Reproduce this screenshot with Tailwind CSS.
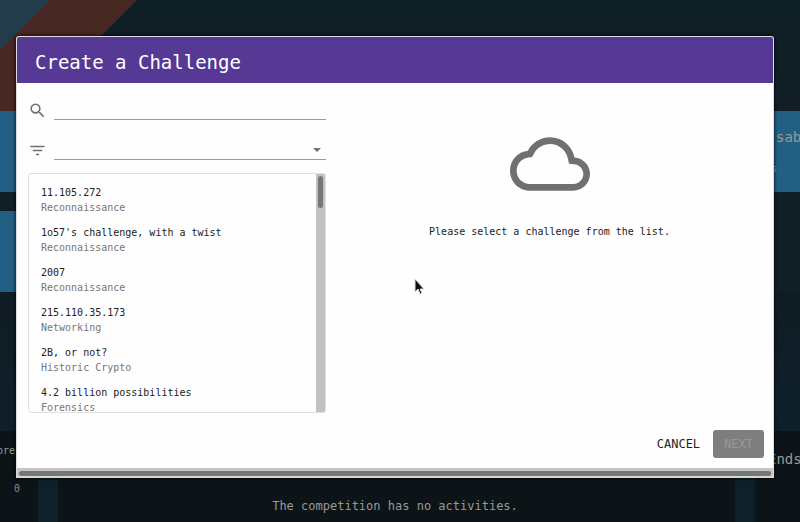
<!DOCTYPE html>
<html lang="en">
<head>
  <meta charset="UTF-8" />
  <meta name="viewport" content="width=device-width, initial-scale=1.0" />
  <title>Create a Challenge</title>
  <script src="https://cdn.jsdelivr.net/npm/@tailwindcss/browser@4"></script>
</head>
<body class="relative min-h-screen overflow-hidden bg-[#101e25] font-['DejaVu_Sans_Mono','Liberation_Mono',monospace]">

  <!-- Dimmed competition page -->
  <div class="min-h-screen flex flex-col text-[#999]">
    <div class="h-[111px] bg-linear-to-b from-[#0e1f26] to-[#121d24]">
      <svg class="w-[140px] h-[111px]" viewBox="0 0 140 111" aria-hidden="true">
        <path d="M0 0H137L26 111H0Z" fill="#472823" />
        <path d="M0 0H50L0 50Z" fill="#233b4a" />
      </svg>
    </div>
    <section class="h-[81px] bg-[#235f82] flex flex-col items-end">
      <h2 class="w-6 mt-4 text-[14px] leading-5 whitespace-nowrap">sab</h2>
      <p class="w-[29px] mt-3 text-[10px] leading-5">s</p>
    </section>
    <section class="w-1/2 h-[81px] mt-[19px] bg-[#235f82]"></section>
    <div class="h-[139px] bg-linear-to-b from-[#101c24] to-[#0e1f2b]"></div>
    <footer class="flex-1 bg-[#0c1417] flex flex-col">
      <div class="flex justify-between items-start pt-[10px]">
        <span class="-ml-[3px] text-[10px] leading-5">ore</span>
        <span class="w-8 mt-2 text-[14px] leading-5 whitespace-nowrap">Ends</span>
      </div>
      <div class="flex-1 flex justify-between pl-[38px] pr-[45px]">
        <div class="w-5 bg-[#0e202a]"></div>
        <div class="w-5 bg-[#0e202a]"></div>
      </div>
    </footer>
  </div>

  <!-- Dialog -->
  <div class="absolute inset-0 flex flex-col pl-4 pr-[26px] pt-9 text-center">
    <div role="dialog" aria-labelledby="dialog-title" class="rounded-t-[3px] border border-b-0 border-[#ddd] bg-[#fefefe] text-left shadow-[0_0_3px_1px_rgba(0,0,0,0.6)] overflow-hidden">
      <header class="h-[46px] px-[18px] flex items-center bg-[#553994]">
        <h1 id="dialog-title" class="pt-1 text-[19px] leading-6 text-white">Create a Challenge</h1>
      </header>

      <div class="flex pt-[13px]">
        <form class="w-[298px] ml-[11px] flex flex-col">
          <div class="flex items-end gap-[7px]">
            <label for="search" aria-label="Search">
              <svg class="size-[19px]" viewBox="0 0 24 24" fill="#707070"><path d="M15.5 14h-.79l-.28-.27A6.471 6.471 0 0 0 16 9.5 6.5 6.5 0 1 0 9.5 16c1.61 0 3.09-.59 4.23-1.57l.27.28v.79l5 4.99L20.49 19l-4.99-5zm-6 0C7.01 14 5 11.99 5 9.5S7.01 5 9.5 5 14 7.01 14 9.5 11.99 14 9.5 14z"/></svg>
            </label>
            <input type="text" id="search" class="flex-1 min-w-0 h-6 border-b border-[#9a9a9a] text-[10px] focus:outline-none">
          </div>
          <div class="relative mt-4 flex items-end gap-[7px]">
            <label for="category" aria-label="Filter">
              <svg class="size-[19px]" viewBox="0 0 24 24" fill="#707070"><path d="M10 18h4v-2h-4v2zM3 6v2h18V6H3zm3 7h12v-2H6v2z"/></svg>
            </label>
            <select id="category" class="flex-1 min-w-0 h-6 appearance-none border-b border-[#9a9a9a] text-[10px] focus:outline-none">
              <option></option>
            </select>
            <svg class="absolute right-[5px] bottom-2 w-2 h-1 pointer-events-none" viewBox="0 0 8 4" fill="#707070" aria-hidden="true"><path d="M0 0h8L4 4z"/></svg>
          </div>

          <div class="mt-[13px] h-[240px] flex rounded-[3px] border border-[#e0e0e0] overflow-hidden">
            <ul class="flex-1 px-3 pt-[6px] overflow-hidden text-[10px] leading-[15px] text-[#777]">
              <li class="h-10 py-[5px]"><p class="text-[#222]">11.105.272</p><p>Reconnaissance</p></li>
              <li class="h-10 py-[5px]"><p class="text-[#222]">1o57's challenge, with a twist</p><p>Reconnaissance</p></li>
              <li class="h-10 py-[5px]"><p class="text-[#222]">2007</p><p>Reconnaissance</p></li>
              <li class="h-10 py-[5px]"><p class="text-[#222]">215.110.35.173</p><p>Networking</p></li>
              <li class="h-10 py-[5px]"><p class="text-[#222]">2B, or not?</p><p>Historic Crypto</p></li>
              <li class="h-10 py-[5px]"><p class="text-[#222]">4.2 billion possibilities</p><p>Forensics</p></li>
            </ul>
            <div class="w-[9px] pt-[2px] bg-[#c1c1c1]" aria-hidden="true">
              <div class="mx-auto w-[5px] h-8 rounded-full bg-[#737777]"></div>
            </div>
          </div>
        </form>

        <div class="flex-1 pt-7 flex flex-col items-center">
          <svg class="size-20" viewBox="0 0 24 24" fill="#707070" aria-hidden="true"><path d="M19.35 10.04C18.67 6.59 15.64 4 12 4 9.11 4 6.6 5.64 5.35 8.04 2.34 8.36 0 10.91 0 14c0 3.31 2.69 6 6 6h13c2.76 0 5-2.24 5-5 0-2.64-2.05-4.78-4.65-4.96zM19 18H6c-2.21 0-4-1.79-4-4 0-2.05 1.53-3.76 3.56-3.97l1.07-.11.5-.95C8.08 7.14 9.94 6 12 6c2.62 0 4.88 1.86 5.39 4.43l.3 1.5 1.53.11c1.56.1 2.78 1.41 2.78 2.96 0 1.65-1.35 3-3 3z"/></svg>
          <p class="mt-5 text-[10px] leading-4 text-[#222]">Please select a challenge from the list.</p>
        </div>
      </div>

      <div class="flex justify-end gap-[7px] pt-[17px] pb-[10px] pr-[9px] text-[12px] leading-4">
        <button type="button" class="h-7 px-[6px] text-[#222]">CANCEL</button>
        <button type="button" disabled class="h-7 px-[11px] rounded-[3px] bg-[#7e7e7e] text-[#999]">NEXT</button>
      </div>

      <div class="h-[10px] px-[2px] flex items-center bg-[#c4c4c4] border-b-2 border-[#d6d8d8]" aria-hidden="true">
        <div class="flex-1 h-[5px] mt-[2px] rounded-full bg-[#757777]"></div>
      </div>
    </div>

    <p class="self-start -mx-[2px] mt-[3px] w-[6px] h-4 text-[10px] leading-4 text-[#888]">0</p>
    <p class="mt-[2px] text-[12px] leading-[14px] text-[#999]">The competition has no activities.</p>
  </div>

  <!-- Pointer -->
  <svg class="absolute left-[414px] top-[278px] w-3 h-[18px]" viewBox="0 0 12 18" aria-hidden="true">
    <path d="M1 1v13l3-3 2 5 2-1-2-4h4z" fill="#111" stroke="#ddd" stroke-width="1" />
  </svg>
</body>
</html>
